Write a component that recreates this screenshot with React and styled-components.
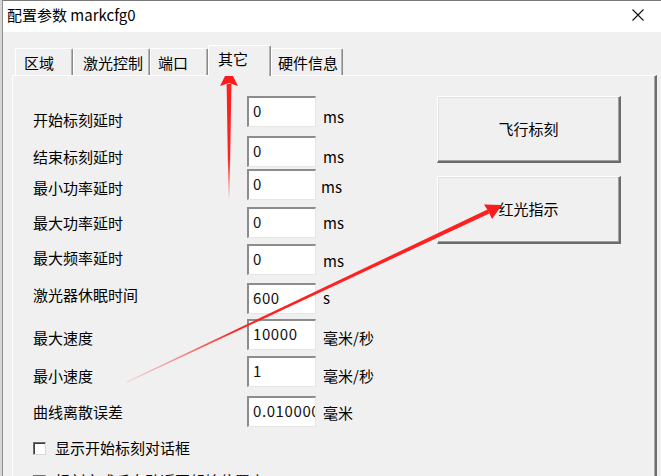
import React from "react";
import styled, { createGlobalStyle } from "styled-components";

const GlobalStyle = createGlobalStyle`
  html, body {
    margin: 0;
    padding: 0;
    background: #d6d6d6;
    overflow: hidden;
  }
  * {
    box-sizing: border-box;
  }
  body {
    font-family: "Microsoft YaHei", "Noto Sans CJK SC", "Noto Sans", sans-serif;
    font-size: 15px;
    color: #000;
  }
`;

const rows = [
  { label: "开始标刻延时", value: "0", unit: "ms", gap: 20, labelY: 24, unitY: 21 },
  { label: "结束标刻延时", value: "0", unit: "ms", gap: 9, labelY: 21, unitY: 21 },
  { label: "最小功率延时", value: "0", unit: "ms", gap: 2, labelY: 19, unitY: 18, unitX: 5 },
  { label: "最大功率延时", value: "0", unit: "ms", gap: 7, labelY: 16, unitY: 16 },
  { label: "最大频率延时", value: "0", unit: "ms", gap: 6, labelY: 14, unitY: 17 },
  { label: "激光器休眠时间", value: "600", unit: "s", gap: 8, labelY: 12, unitY: 15 },
  { label: "最大速度", value: "10000", unit: "毫米/秒", gap: 5, labelY: 19, unitY: 19 },
  { label: "最小速度", value: "1", unit: "毫米/秒", gap: 6, labelY: 20, unitY: 20 },
  { label: "曲线离散误差", value: "0.010000", unit: "毫米", gap: 9, labelY: 16, unitY: 17 },
];

const tabs = [
  { name: "区域", width: 58, pad: 8 },
  { name: "激光控制", width: 77, pad: 9 },
  { name: "端口", width: 58, pad: 7 },
  { name: "其它", width: 63, pad: 9, active: true },
  { name: "硬件信息", width: 72, pad: 6 },
];

export default function App() {
  return (
    <>
      <GlobalStyle />
      <Desktop>
        <Window>
          <TitleBar>
            <Title>配置参数 markcfg0</Title>
            <CloseButton aria-label="close">
              <svg width="12" height="12" viewBox="0 0 12 12">
                <path d="M0.5 0.5 L11.5 11.5 M11.5 0.5 L0.5 11.5" stroke="#111" strokeWidth="1.1" />
              </svg>
            </CloseButton>
          </TitleBar>

          <Body>
            <TabStrip>
              {tabs.map((t) => (
                <Tab key={t.name} $width={t.width} $pad={t.pad} $active={t.active}>
                  {t.name}
                </Tab>
              ))}
            </TabStrip>

            <Panel>
              <Fields>
                {rows.map((r) => (
                  <Row key={r.label} $gap={r.gap}>
                    <Label $y={r.labelY}>{r.label}</Label>
                    <Field readOnly value={r.value} />
                    <Unit $y={r.unitY} $x={r.unitX ?? 7}>{r.unit}</Unit>
                  </Row>
                ))}
                <CheckRow $gap={11}>
                  <Box />
                  <span>显示开始标刻对话框</span>
                </CheckRow>
                <CheckRow $gap={13}>
                  <Box />
                  <span>标刻完成后自动返回起始位置点</span>
                </CheckRow>
              </Fields>

              <Actions>
                <Button $h={67}>飞行标刻</Button>
                <Button $h={68}>红光指示</Button>
              </Actions>
            </Panel>
          </Body>
        </Window>

        <Annotations width="661" height="476" viewBox="0 0 661 476">
          <defs>
            <linearGradient id="fadeUp" x1="0" y1="1" x2="0" y2="0">
              <stop offset="0" stopColor="#ff3030" stopOpacity="0.15" />
              <stop offset="0.35" stopColor="#ff2020" stopOpacity="1" />
            </linearGradient>
            <linearGradient id="fadeRight" gradientUnits="userSpaceOnUse" x1="127" y1="382" x2="490" y2="211">
              <stop offset="0" stopColor="#ff4040" stopOpacity="0.15" />
              <stop offset="0.3" stopColor="#ff2020" stopOpacity="1" />
            </linearGradient>
          </defs>
          <polygon points="226.6,84 231.4,84 229.5,198 228.5,198" fill="url(#fadeUp)" />
          <polygon points="229,68 238,86 229,83 220,86" fill="#fa1c1c" />
          <polygon points="126.8,381.6 127.2,382.4 489.3,213.4 487.5,209.4" fill="url(#fadeRight)" />
          <polygon points="502,205 492,219 488.5,211.5 484,204.5" fill="#fa1c1c" />
        </Annotations>
      </Desktop>
    </>
  );
}

const Desktop = styled.div`
  position: relative;
  width: 661px;
  height: 476px;
  overflow: hidden;
  display: flex;
  padding-left: 2px;
  background: #d6d6d6;
`;

const Window = styled.div`
  flex: 1;
  display: flex;
  flex-direction: column;
  background: #f0f0f0;
  border-left: 1px solid #8e8e8e;
  border-top: 1px solid #7a7a7a;
`;

const TitleBar = styled.div`
  height: 31px;
  flex: none;
  display: flex;
  align-items: center;
  justify-content: space-between;
  background: #fff;
  padding-left: 4px;
`;

const Title = styled.span`
  font-size: 15px;
  line-height: 20px;
  margin-top: -3px;
  color: #000;
`;

const CloseButton = styled.div`
  width: 44px;
  height: 31px;
  display: flex;
  align-items: center;
  justify-content: center;
  padding-bottom: 3px;
  padding-right: 2px;
`;

const Body = styled.div`
  flex: 1;
  display: flex;
  flex-direction: column;
  padding: 13px 4px 0 9px;
`;

const TabStrip = styled.div`
  display: flex;
  align-items: flex-end;
  padding-left: 3px;
  position: relative;
  z-index: 1;
`;

const Tab = styled.div`
  width: ${(p) => p.$width}px;
  height: ${(p) => (p.$active ? 31 : 27)}px;
  margin-bottom: ${(p) => (p.$active ? -1 : 0)}px;
  padding-left: ${(p) => p.$pad}px;
  padding-top: ${(p) => (p.$active ? 3 : 4)}px;
  line-height: 20px;
  font-size: 15px;
  white-space: nowrap;
  background: #f0f0f0;
  border-top: 1px solid #fff;
  border-left: 1px solid #fff;
  border-right: 1px solid #8a8a8a;
  border-top-left-radius: 2px;
  border-top-right-radius: 2px;
  box-shadow: inset -1px 0 0 #b4b4b4;
`;

const Panel = styled.div`
  flex: 1;
  display: grid;
  grid-template-columns: 424px 184px;
  align-content: start;
  border-top: 1px solid #fff;
  border-left: 1px solid #fff;
  border-right: 2px solid #6e6e6e;
  box-shadow: inset -1px 0 0 #a8a8a8;
`;

const Fields = styled.div`
  display: flex;
  flex-direction: column;
  padding-left: 20px;
`;

const Row = styled.div`
  display: flex;
  align-items: flex-start;
  height: 31px;
  margin-top: ${(p) => p.$gap}px;
`;

const Label = styled.div`
  width: 214px;
  flex: none;
  line-height: 20px;
  padding-top: ${(p) => p.$y - 10}px;
  white-space: nowrap;
`;

const Field = styled.input`
  width: 69px;
  height: 31px;
  flex: none;
  margin: 0;
  padding: 0 0 3px 4px;
  font: inherit;
  font-size: 15px;
  letter-spacing: 0.6px;
  color: #111;
  background: #fff;
  border-style: solid;
  border-width: 2px 1px 1px 2px;
  border-color: #8c8c8c #e6e6e6 #e6e6e6 #8c8c8c;
  outline: none;
  overflow: hidden;
`;

const Unit = styled.div`
  margin-left: ${(p) => p.$x}px;
  line-height: 20px;
  padding-top: ${(p) => p.$y - 10}px;
  white-space: nowrap;
`;

const CheckRow = styled.div`
  display: flex;
  align-items: center;
  gap: 9px;
  height: 20px;
  line-height: 20px;
  margin-top: ${(p) => p.$gap}px;
  white-space: nowrap;
`;

const Box = styled.span`
  width: 13px;
  height: 13px;
  flex: none;
  background: #fff;
  border: 1px solid;
  border-color: #6e6e6e #d8d8d8 #d8d8d8 #6e6e6e;
  box-shadow: inset 1px 1px 0 #3c3c3c;
`;

const Actions = styled.div`
  display: flex;
  flex-direction: column;
  gap: 13px;
  padding-top: 20px;
`;

const Button = styled.div`
  height: ${(p) => p.$h}px;
  display: flex;
  align-items: center;
  justify-content: center;
  background: #f0f0f0;
  border-style: solid;
  border-width: 1px 2px 2px 1px;
  border-color: #fff #6b6b6b #6b6b6b #fff;
  box-shadow: inset -1px -1px 0 #a0a0a0, inset 1px 1px 0 #e3e3e3;
  font-size: 15px;
  padding-bottom: 2px;
`;

const Annotations = styled.svg`
  position: absolute;
  left: 0;
  top: 0;
  pointer-events: none;
`;
